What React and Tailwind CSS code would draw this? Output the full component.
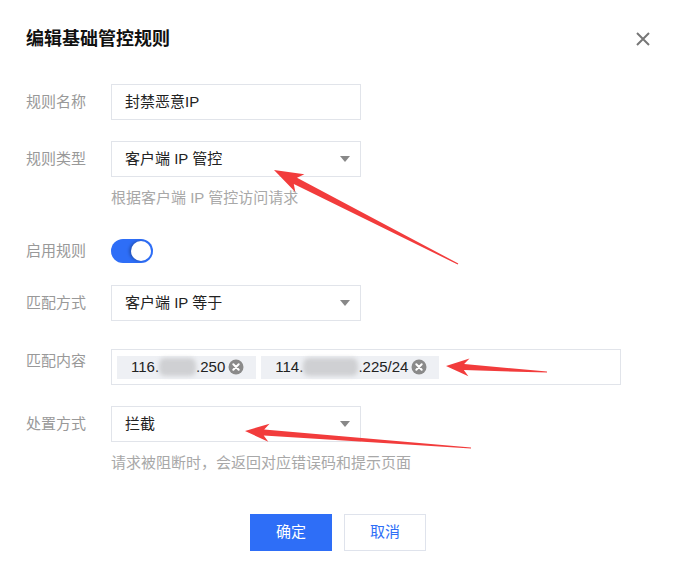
import React from 'react';

function arrowPoints(sx, sy, tx, ty, head = 20, wing = 8, neck = 3, tail = 0.6) {
  const dx = tx - sx;
  const dy = ty - sy;
  const len = Math.hypot(dx, dy);
  const ux = dx / len;
  const uy = dy / len;
  const nx = -uy;
  const ny = ux;
  const hx = tx - ux * head;
  const hy = ty - uy * head;
  const bx = tx - ux * (head + 5);
  const by = ty - uy * (head + 5);
  const pts = [
    [sx + nx * tail, sy + ny * tail],
    [hx + nx * neck, hy + ny * neck],
    [bx + nx * wing, by + ny * wing],
    [tx, ty],
    [bx - nx * wing, by - ny * wing],
    [hx - nx * neck, hy - ny * neck],
    [sx - nx * tail, sy - ny * tail],
  ];
  return pts.map((p) => p.map((v) => v.toFixed(1)).join(',')).join(' ');
}

function Caret() {
  return (
    <svg width="10" height="6" viewBox="0 0 10 6" className="shrink-0">
      <path d="M0 0h10L5 6z" fill="#888" />
    </svg>
  );
}

function Select({ value }) {
  return (
    <div className="w-[250px] h-9 border border-[#e1e4ea] bg-white flex items-center justify-between pl-[13px] pr-[10px] text-[15px] text-[#222]">
      <span>{value}</span>
      <Caret />
    </div>
  );
}

function Row({ label, children, top = false }) {
  return (
    <div className={`flex ${top ? 'items-start' : 'items-center'}`}>
      <div className={`w-[85px] shrink-0 text-[15px] text-[#999] leading-5 ${top ? 'pt-[2px]' : ''}`}>{label}</div>
      {children}
    </div>
  );
}

function Tag({ head, blur, tail }) {
  return (
    <div className="h-[23px] bg-[#eef0f4] flex items-center pl-[14px] pr-[12px] text-[15px] text-[#222]">
      <span>{head}</span>
      <span className={`inline-block h-[18px] bg-[#cfd0d3] blur-[2px] rounded-md ${blur}`} />
      <span>{tail}</span>
      <svg width="16" height="16" viewBox="0 0 16 16" className="ml-[3px]">
        <circle cx="8" cy="8" r="7.5" fill="#8a8a8a" />
        <path d="M5.3 5.3l5.4 5.4M10.7 5.3l-5.4 5.4" stroke="#fff" strokeWidth="2" strokeLinecap="round" />
      </svg>
    </div>
  );
}

export default function App() {
  return (
    <div className="relative w-[677px] h-[581px] bg-white overflow-hidden font-['Liberation_Sans','Noto_Sans_CJK_SC',sans-serif]">
      <div className="pl-[26px] pr-[27px] pt-[29px]">
        {/* Title */}
        <div className="flex items-center justify-between h-5">
          <h1 className="text-[18px] font-bold text-[#111] leading-5">编辑基础管控规则</h1>
          <svg width="14" height="14" viewBox="0 0 14 14">
            <path d="M1 1l12 12M13 1L1 13" stroke="#777" strokeWidth="2" />
          </svg>
        </div>

        <div className="mt-[35px]">
          <Row label="规则名称">
            <div className="w-[250px] h-9 border border-[#e1e4ea] flex items-center pl-[13px] text-[15px] text-[#222]">封禁恶意IP</div>
          </Row>
        </div>

        <div className="mt-[21px]">
          <Row label="规则类型">
            <Select value="客户端 IP 管控" />
          </Row>
        </div>
        <div className="mt-[13px] ml-[85px] text-[15px] leading-4 text-[#a8a8a8]">根据客户端 IP 管控访问请求</div>

        <div className="mt-[33px]">
          <Row label="启用规则">
            <div className="w-[42px] h-6 rounded-full bg-[#2e6ef7] flex items-center justify-end pr-[2px]">
              <div className="w-5 h-5 rounded-full bg-white shadow-[-2px_0_3px_rgba(0,0,0,0.25)]" />
            </div>
          </Row>
        </div>

        <div className="mt-[22px]">
          <Row label="匹配方式">
            <Select value="客户端 IP 等于" />
          </Row>
        </div>

        <div className="mt-[28px]">
          <Row label="匹配内容" top>
            <div className="w-[510px] h-9 border border-[#e1e4ea] flex items-center gap-[5px] pl-[5px]">
              <Tag head="116." blur="w-[37px]" tail=".250" />
              <Tag head="114." blur="w-[55px]" tail=".225/24" />
            </div>
          </Row>
        </div>

        <div className="mt-[21px]">
          <Row label="处置方式">
            <Select value="拦截" />
          </Row>
        </div>
        <div className="mt-[13px] ml-[85px] text-[15px] leading-4 text-[#a8a8a8]">请求被阻断时，会返回对应错误码和提示页面</div>

        <div className="mt-[43px] flex justify-center gap-3">
          <button className="w-[82px] h-[37px] bg-[#2e6ef7] text-white text-[15px]">确定</button>
          <button className="w-[82px] h-[37px] border border-[#dfe3ec] bg-white text-[#2e6ef7] text-[15px]">取消</button>
        </div>
      </div>

      {/* annotation arrows */}
      <svg className="absolute inset-0 pointer-events-none" width="677" height="581">
        <polygon points={arrowPoints(458, 264, 274, 170, 24, 10, 3.5, 0.6)} fill="#f23c3c" />
        <polygon points={arrowPoints(547, 372, 446, 366, 18, 9, 3, 0.6)} fill="#f23c3c" />
        <polygon points={arrowPoints(471, 448, 245, 431, 19, 9, 3, 0.6)} fill="#f23c3c" />
      </svg>
    </div>
  );
}
